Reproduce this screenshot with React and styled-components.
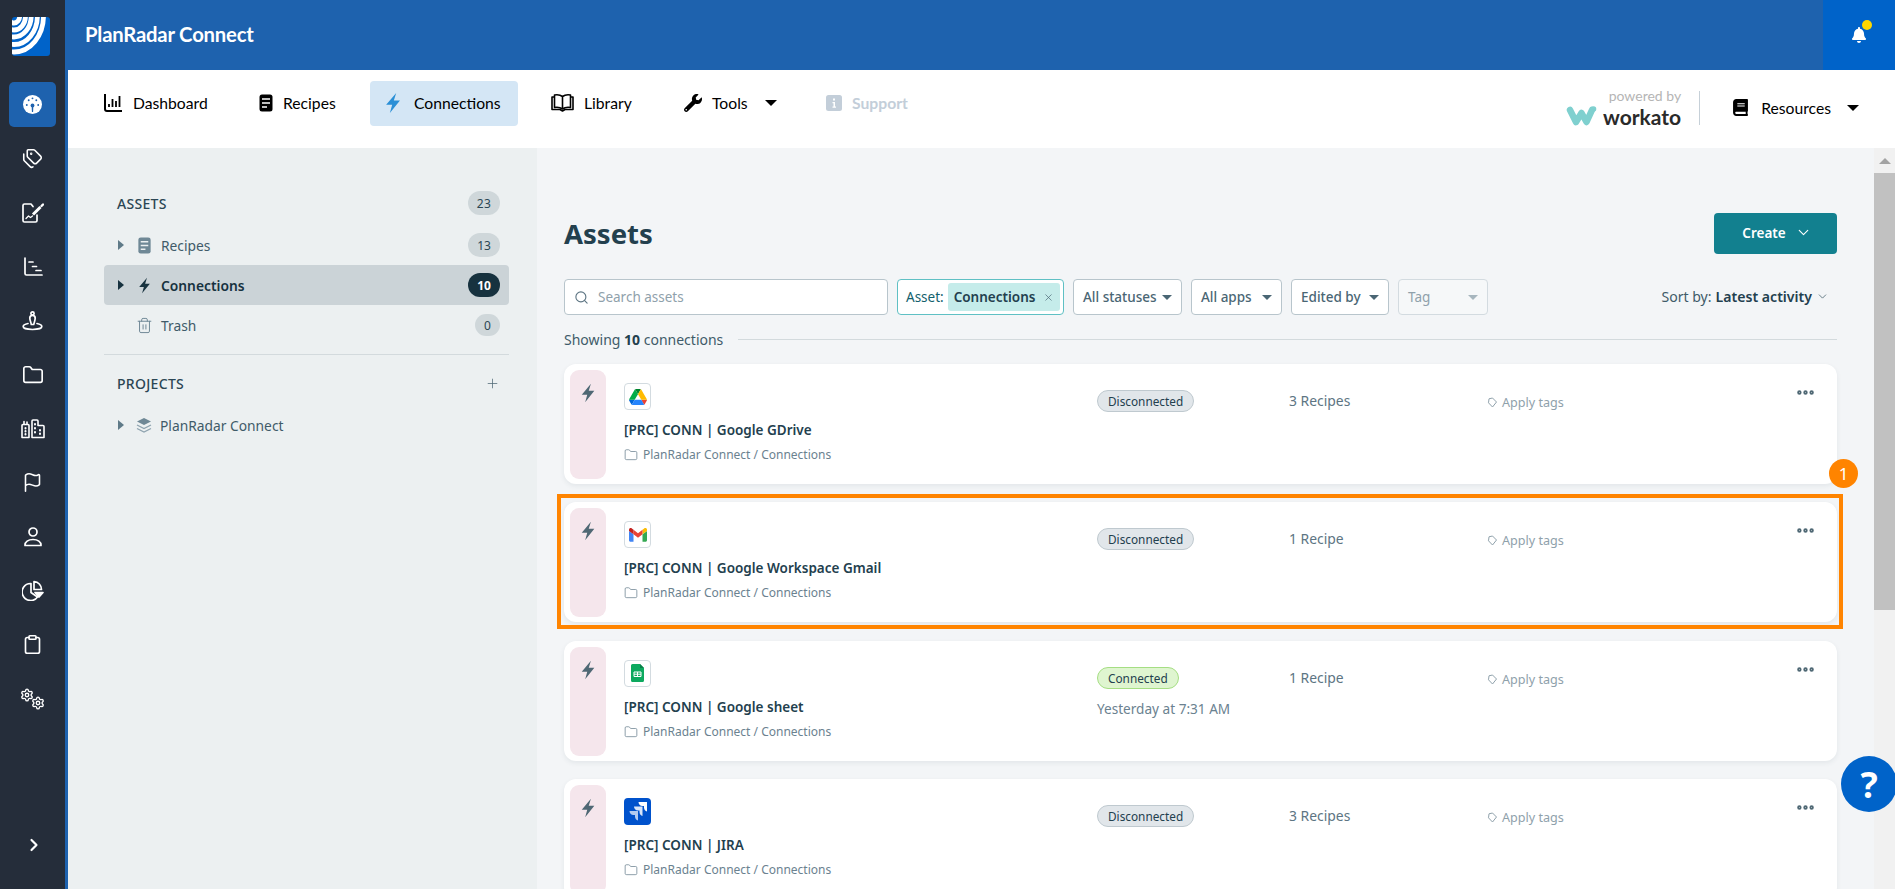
import React from "react";
import styled, { createGlobalStyle } from "styled-components";
import { Tags, Folder, Flag, Clipboard, ChevronRight, ChevronDown, Search, Plus, X, Trash2, MoreHorizontal, Settings } from "lucide-react";
import { FaBell, FaBook, FaWrench } from "react-icons/fa";

const GlobalStyle = createGlobalStyle`
  html, body {
    margin: 0;
    height: 100%;
    overflow: hidden;
    background: #fff;
    font-family: "Noto Sans", "Open Sans", sans-serif;
    color: #23404e;
  }
  #root { height: 100%; }
  * { box-sizing: border-box; }
`;

const Page = styled.div`
  position: relative;
  display: flex;
  width: 1895px;
  height: 889px;
  overflow: hidden;
`;

const Rail = styled.aside`
  width: 68px;
  flex: none;
  background: #252d3a;
  border-right: 3px solid #1e62ae;
  display: flex;
  flex-direction: column;
  align-items: center;
`;

const LogoBox = styled.div`
  height: 78px;
  padding: 17px 3px 0 0;
  width: 65px;
  display: flex;
  justify-content: center;
`;

const RailIcon = styled.div`
  width: 47px;
  height: 45px;
  margin-bottom: 9px;
  flex: none;
  border-radius: 5px;
  display: flex;
  align-items: center;
  justify-content: center;
  color: #fff;
  background: ${(p) => (p.$active ? "#1e62ae" : "transparent")};
  margin-top: ${(p) => (p.$active ? "4px" : "0")};
`;

const RailFoot = styled.div`
  margin-top: auto;
  height: 54px;
  color: #fff;
  display: flex;
  align-items: flex-start;
  padding-left: 2px;
`;

const Main = styled.div`
  flex: 1;
  min-width: 0;
  display: flex;
  flex-direction: column;
`;

const Header = styled.header`
  height: 70px;
  flex: none;
  background: #1e62ae;
  display: flex;
  align-items: center;
  justify-content: space-between;
  padding-left: 17px;
`;

const HeaderTitle = styled.div`
  font-family: "Lato", sans-serif;
  font-weight: 700;
  font-size: 20.3px;
  letter-spacing: -0.2px;
  color: #fff;
  margin-top: -2px;
`;

const BellBox = styled.div`
  position: relative;
  width: 72px;
  height: 70px;
  background: #0063c9;
  color: #fff;
  display: flex;
  align-items: center;
  justify-content: center;
`;

const BellDot = styled.span`
  position: absolute;
  top: 20px;
  left: 39px;
  width: 10px;
  height: 10px;
  border-radius: 50%;
  background: #ffd800;
`;

const NavBar = styled.nav`
  height: 78px;
  flex: none;
  background: #fff;
  display: flex;
  align-items: flex-start;
  padding: 11px 0 0 24px;
  font-family: "Lato", sans-serif;
  font-size: 15.7px;
  color: #000;
`;

const NavItem = styled.div`
  height: 45px;
  width: ${(p) => p.$width}px;
  margin-left: ${(p) => p.$offset || 0}px;
  flex: none;
  display: flex;
  align-items: center;
  gap: ${(p) => p.$gap || 10}px;
  padding: 0 0 2px 12px;
  border-radius: 4px;
  background: ${(p) => (p.$active ? "#d4e6f5" : "transparent")};
  color: ${(p) => (p.$muted ? "#c3ced9" : "#000")};
  font-weight: ${(p) => (p.$muted ? 700 : 400)};
`;

const Caret = styled.span`
  width: 0;
  height: 0;
  margin-left: ${(p) => p.$gap || 0}px;
  border-left: ${(p) => p.$size || 5}px solid transparent;
  border-right: ${(p) => p.$size || 5}px solid transparent;
  border-top: ${(p) => p.$size || 5}px solid ${(p) => p.$color || "#000"};
`;

const NavRight = styled.div`
  margin-left: auto;
  display: flex;
  align-items: center;
  height: 45px;
  padding-right: 36px;
  margin-top: 4px;
`;

const Powered = styled.div`
  display: flex;
  flex-direction: column;
  align-items: flex-end;
  padding-right: 18px;
  margin-right: 32px;
  border-right: 1px solid #c6d0d8;
  height: 34px;
  justify-content: center;
  font-family: "Lato", sans-serif;
`;

const PoweredBy = styled.span`
  font-size: 14px;
  line-height: 17px;
  color: #b5b5b5;
`;

const WorkatoRow = styled.div`
  display: flex;
  align-items: center;
  gap: 6px;
  height: 25px;
  line-height: 25px;
  font-weight: 700;
  font-size: 21px;
  color: #2a2a2a;
  flex: none;
`;

const Resources = styled.div`
  display: flex;
  align-items: center;
  gap: 12px;
  color: #000;
`;

const Body = styled.div`
  flex: 1;
  min-height: 0;
  display: flex;
`;

const Sidebar = styled.aside`
  width: 469px;
  flex: none;
  background: #ecf0f1;
  padding: 42px 28px 0 36px;
`;

const SectionHead = styled.div`
  height: 26px;
  padding: 0 9px 0 13px;
  display: flex;
  align-items: center;
  justify-content: space-between;
  font-size: 14px;
  font-weight: 500;
  letter-spacing: 0.3px;
  color: #2b4654;
  margin-bottom: ${(p) => p.$mb || 0}px;
`;

const Row = styled.div`
  height: 40px;
  padding: 0 9px 0 14px;
  display: flex;
  align-items: center;
  gap: 8px;
  border-radius: 4px;
  font-size: 13.8px;
  font-weight: ${(p) => (p.$active ? 600 : 400)};
  color: ${(p) => (p.$active ? "#17323f" : "#3f5b69")};
  background: ${(p) => (p.$active ? "#cbd3d7" : "transparent")};
`;

const Arrow = styled.span`
  width: 0;
  height: 0;
  margin-right: 4px;
  flex: none;
  border-top: 5px solid transparent;
  border-bottom: 5px solid transparent;
  border-left: 6px solid ${(p) => (p.$hidden ? "transparent" : p.$dark ? "#17323f" : "#5f7a88")};
`;

const Count = styled.span`
  margin-left: auto;
  min-width: ${(p) => (p.$small ? 25 : 32)}px;
  height: ${(p) => (p.$small ? 22 : 24)}px;
  border-radius: 12px;
  display: flex;
  align-items: center;
  justify-content: center;
  font-size: 12px;
  font-weight: ${(p) => (p.$dark ? 700 : 400)};
  color: ${(p) => (p.$dark ? "#fff" : "#2b4654")};
  background: ${(p) => (p.$dark ? "#17323f" : "#cfd7da")};
`;

const Divider = styled.hr`
  border: 0;
  border-top: 1px solid #d3dadd;
  margin: 9px 0 15px;
`;

const Content = styled.main`
  flex: 1;
  min-width: 0;
  background: #f3f5f7;
  padding: 65px 37px 0 27px;
  overflow: hidden;
`;

const TitleRow = styled.div`
  display: flex;
  align-items: center;
  justify-content: space-between;
  height: 41px;
  margin-bottom: 25px;
`;

const Title = styled.h1`
  margin: 0;
  font-size: 27.5px;
  font-weight: 700;
  color: #23404e;
`;

const CreateButton = styled.button`
  width: 123px;
  height: 41px;
  border: 0;
  border-radius: 4px;
  background: #12808f;
  color: #fff;
  font-family: inherit;
  font-size: 13.5px;
  font-weight: 600;
  display: flex;
  align-items: center;
  justify-content: center;
  gap: 9px;
  padding: 0 0 2px 3px;
`;

const Filters = styled.div`
  display: flex;
  align-items: center;
  gap: 9px;
  height: 36px;
`;

const SearchBox = styled.div`
  width: 324px;
  height: 36px;
  background: #fff;
  border: 1px solid #b8c5cc;
  border-radius: 4px;
  display: flex;
  align-items: center;
  gap: 9px;
  padding-left: 9px;
  font-size: 13.5px;
  color: #8fa1ab;
  & svg { color: #5d7583; }
`;

const AssetChip = styled.div`
  width: 167px;
  height: 36px;
  background: #fff;
  border: 1px solid #5fc0c4;
  border-radius: 4px;
  display: flex;
  align-items: center;
  gap: 4px;
  padding: 3px 3px 3px 8px;
  font-size: 13.5px;
  color: #12606d;
`;

const ChipValue = styled.span`
  flex: 1;
  height: 28px;
  border-radius: 3px;
  background: #c5ecea;
  color: #23404e;
  font-weight: 600;
  display: flex;
  align-items: center;
  justify-content: space-between;
  padding: 0 6px;
  & svg { color: #4a6674; }
`;

const Dropdown = styled.div`
  width: ${(p) => p.$width}px;
  height: 36px;
  flex: none;
  background: ${(p) => (p.$disabled ? "#f6f8f9" : "#fff")};
  border: 1px solid ${(p) => (p.$disabled ? "#d3dbe0" : "#b8c5cc")};
  border-radius: 4px;
  display: flex;
  align-items: center;
  justify-content: space-between;
  padding: 0 9px;
  font-size: 13.5px;
  font-weight: ${(p) => (p.$disabled ? 400 : 500)};
  color: ${(p) => (p.$disabled ? "#8fa1ab" : "#4a6674")};
`;

const SortBy = styled.div`
  margin-left: auto;
  display: flex;
  align-items: center;
  gap: 4px;
  padding: 0 8px 1px 0;
  font-size: 14.1px;
  color: #3f5b69;
  & b { font-weight: 600; color: #23404e; }
`;

const ShowingRow = styled.div`
  display: flex;
  align-items: center;
  gap: 15px;
  height: 20px;
  margin-top: 14px;
  margin-bottom: 15px;
  font-size: 14px;
  color: #3f5b69;
  white-space: nowrap;
  & b { font-weight: 700; color: #23404e; }
  &::after {
    content: "";
    flex: 1;
    border-top: 1px solid #d3dadd;
  }
`;

const CardWrap = styled.div`
  position: relative;
  margin-bottom: 18.3px;
`;

const Card = styled.article`
  height: 120px;
  background: #fff;
  border-radius: 12px;
  box-shadow: 0 2px 5px rgba(35, 64, 78, 0.08);
  padding: 6px;
  display: flex;
  overflow: hidden;
`;

const Strip = styled.div`
  width: 36px;
  height: 109px;
  flex: none;
  background: #f5e6ec;
  border-radius: 9px;
  display: flex;
  justify-content: center;
  padding-top: 13px;
  color: #4f6874;
`;

const CardMain = styled.div`
  width: 491px;
  flex: none;
  padding: 13px 0 0 18px;
`;

const AppIcon = styled.div`
  width: 27px;
  height: 27px;
  border-radius: 4px;
  background: ${(p) => (p.$filled ? "#0052cc" : "#fff")};
  border: ${(p) => (p.$filled ? "0" : "1px solid #d3dbe0")};
  display: flex;
  align-items: center;
  justify-content: center;
`;

const CardTitle = styled.div`
  margin-top: 10px;
  font-size: 13.5px;
  line-height: 20px;
  font-weight: 600;
  color: #23404e;
`;

const CardPath = styled.div`
  margin-top: 6px;
  display: flex;
  align-items: center;
  gap: 5px;
  font-size: 12px;
  line-height: 18px;
  color: #6b8290;
`;

const StatusCol = styled.div`
  width: 192px;
  flex: none;
  padding-top: 19px;
`;

const Status = styled.span`
  display: inline-flex;
  align-items: center;
  height: 22px;
  padding: 0 10px;
  border-radius: 11px;
  font-size: 11.8px;
  color: #23404e;
  background: ${(p) => (p.$ok ? "#dff5d0" : "#e1e6ea")};
  border: 1px solid ${(p) => (p.$ok ? "#a5de83" : "#bfc9cf")};
`;

const StatusTime = styled.div`
  margin-top: 10px;
  font-size: 13.6px;
  color: #6b8290;
`;

const RecipesCol = styled.div`
  width: 198px;
  flex: none;
  padding-top: 21px;
  font-size: 13.9px;
  line-height: 20px;
  color: #5d7583;
`;

const TagsCol = styled.div`
  flex: 1;
  padding-top: 24px;
  display: flex;
  align-items: flex-start;
  gap: 4px;
  font-size: 12.6px;
  line-height: 17px;
  color: #8fa1ab;
  & svg { margin-top: 3px; }
`;

const More = styled.div`
  width: 36px;
  flex: none;
  color: #4f6874;
  padding-top: 12px;
`;

const Highlight = styled.div`
  position: absolute;
  left: -7px;
  right: -6px;
  top: -8px;
  bottom: -7px;
  border: 4px solid #ff8400;
  pointer-events: none;
`;

const StepBadge = styled.div`
  position: absolute;
  top: -43px;
  right: -21px;
  width: 29px;
  height: 29px;
  border-radius: 50%;
  background: #ff8400;
  color: #fff;
  font-size: 17px;
  display: flex;
  align-items: center;
  justify-content: center;
`;

const Scrollbar = styled.div`
  width: 21px;
  flex: none;
  background: #f1f1f1;
  display: flex;
  flex-direction: column;
  align-items: center;
`;

const ScrollUp = styled.span`
  width: 0;
  height: 0;
  margin-top: 10px;
  margin-bottom: 9px;
  border-left: 6px solid transparent;
  border-right: 6px solid transparent;
  border-bottom: 6px solid #a3a3a3;
`;

const ScrollThumb = styled.div`
  width: 100%;
  height: 437px;
  background: #c1c1c1;
`;

const HelpButton = styled.div`
  position: absolute;
  left: 1841px;
  top: 756px;
  width: 56px;
  height: 56px;
  border-radius: 50%;
  background: #0063c9;
  color: #fff;
  font-size: 36px;
  font-weight: 700;
  display: flex;
  align-items: center;
  justify-content: center;
`;

const Bolt = ({ size = 16, color = "currentColor" }) => (
  <svg width={size} height={size} viewBox="0 0 24 24" fill={color}>
    <path d="M15.5 1 4.5 14h6.6L8.6 23l11-13.6h-6.7z" />
  </svg>
);

const PlanRadarLogo = () => (
  <svg width="38" height="39" viewBox="0 0 38 39">
    <defs>
      <clipPath id="logoClip">
        <rect width="38" height="39" rx="3" />
      </clipPath>
    </defs>
    <g clipPath="url(#logoClip)">
      <rect width="38" height="39" fill="#0063c9" />
      <g fill="none" stroke="#fff" strokeWidth="4.8">
        <ellipse cx="2" cy="-1" rx="5.700" ry="7" />
        <ellipse cx="2" cy="-1" rx="11.500" ry="14" />
        <ellipse cx="2" cy="-1" rx="17.200" ry="21" />
        <ellipse cx="2" cy="-1" rx="23.400" ry="28.500" />
        <ellipse cx="2" cy="-1" rx="29.500" ry="36" />
      </g>
    </g>
  </svg>
);

const GaugeIcon = () => (
  <svg width="19" height="19" viewBox="0 0 20 20">
    <circle cx="10" cy="10" r="10" fill="#fff" />
    <path d="M9 10h2l-.4 8h-1.200z" fill="#1e62ae" />
    <circle cx="10" cy="11" r="2" fill="#1e62ae" />
    <circle cx="4" cy="10.500" r="1" fill="#1e62ae" />
    <circle cx="16" cy="10.500" r="1" fill="#1e62ae" />
    <circle cx="6" cy="5.500" r="1" fill="#1e62ae" />
    <circle cx="14" cy="5.500" r="1" fill="#1e62ae" />
    <circle cx="10" cy="3.500" r="1" fill="#1e62ae" />
  </svg>
);

const strokeProps = { fill: "none", stroke: "currentColor", strokeWidth: 1.7, strokeLinecap: "round", strokeLinejoin: "round" };

const DocChartIcon = () => (
  <svg width="22" height="20" viewBox="0 0 22 20" {...strokeProps}>
    <path d="M15 12v5.500a1.500 1.500 0 0 1-1.500 1.500h-11A1.500 1.500 0 0 1 1 17.500v-15A1.500 1.500 0 0 1 2.500 1H9l2 2.500" />
    <path d="M4 15.500l2.500-2.500 2 1.500 2-1.500" strokeWidth="1.300" />
    <path d="M11 11.500l7.500-7.500" strokeWidth="3" strokeLinecap="butt" />
    <path d="M19.500 3l1.500-1.500" strokeWidth="2.400" />
  </svg>
);

const GanttIcon = () => (
  <svg width="20" height="20" viewBox="0 0 20 20" {...strokeProps}>
    <path d="M2 1v15.500a1.500 1.500 0 0 0 1.500 1.500H19" />
    <path d="M6 5h4M9.500 9.500h4M13 13.500h5" />
  </svg>
);

const PinIcon = () => (
  <svg width="21" height="20" viewBox="0 0 21 20" {...strokeProps}>
    <circle cx="10.500" cy="2.500" r="1.600" />
    <path d="M7.800 7a2.700 2.700 0 0 1 5.400 0c0 2-1 4.500-1.500 6.500h-2.400C9 11.500 7.800 9 7.800 7z" />
    <path d="M6 12.500c-3 .6-4.800 1.700-4.800 3 0 1.800 4.200 3 9.300 3s9.300-1.200 9.300-3c0-1.300-1.800-2.400-4.800-3" />
  </svg>
);

const BuildingsIcon = () => (
  <svg width="24" height="20" viewBox="0 0 24 20" {...strokeProps} strokeWidth="1.600">
    <path d="M1 18.500V6.500a1 1 0 0 1 1-1h5a1 1 0 0 1 1 1v12z" />
    <path d="M3 5V2.500M6 5V3" />
    <path d="M11 18.500V2a1 1 0 0 1 1-1h4a1 1 0 0 1 1 1v4.500h5a1 1 0 0 1 1 1v11z" />
    <path d="M4.500 9v.5M4.500 12v.5M4.500 15v.5M14 5v.5M14 9v.5M14 13v.5M19 11v.5M19 14.500v.5" strokeWidth="2" />
  </svg>
);

const PersonIcon = () => (
  <svg width="20" height="20" viewBox="0 0 20 20" {...strokeProps}>
    <circle cx="10" cy="5" r="4" />
    <path d="M2 18.500v-.5c0-3 3-5.500 8-5.500s8 2.500 8 5.500v.5z" />
  </svg>
);

const PieIcon = () => (
  <svg width="22" height="21" viewBox="0 0 22 21" {...strokeProps}>
    <path d="M9 3.500A8.500 8.500 0 1 0 15.500 17L9 12.500z" />
    <path d="M12 1.500a8 8 0 0 1 7.500 8H12z" />
    <path d="M13 12.500h8l-4 4.500z" fill="currentColor" />
  </svg>
);

const GearsIcon = () => (
  <svg width="25" height="22" viewBox="0 0 25 22">
    <Settings x={0} y={0} size={14} strokeWidth={2.3} />
    <Settings x={11} y={8} size={14} strokeWidth={2.3} />
  </svg>
);

const DashboardIcon = () => (
  <svg width="19" height="19" viewBox="0 0 19 19" fill="none" stroke="#000" strokeWidth="2">
    <path d="M1 1v15a2 2 0 0 0 2 2h15" />
    <path d="M5 14v-3M8.500 14V6M12 14V8M15.500 14V3" strokeWidth="1.800" />
  </svg>
);

const RecipeIcon = ({ color = "#000", line = "#fff", size = 18 }) => (
  <svg width={size} height={size} viewBox="0 0 16 18">
    <rect x="1.500" y="0.500" width="13" height="17" rx="2.500" fill={color} />
    <path d="M4 5h8M4 9h8M4 13h5" stroke={line} strokeWidth="1.600" />
  </svg>
);

const LibraryIcon = () => (
  <svg width="23" height="19" viewBox="0 0 23 19" fill="none" stroke="#000" strokeWidth="1.600" strokeLinejoin="round">
    <path d="M11.500 3.500C9.500 2 6.500 1.500 3.500 2v12.500c3-.5 6 0 8 1.500 2-1.500 5-2 8-1.500V2c-3-.5-6 0-8 1.500zM11.500 3.500V16" />
    <path d="M3.500 4H1v12.500h8l2.500 1.500 2.500-1.500h8V4h-2.500" />
  </svg>
);

const InfoSquare = () => (
  <svg width="16" height="16" viewBox="0 0 16 16">
    <rect width="16" height="16" rx="2.500" fill="#c3ced9" />
    <path d="M7 3.500h2v2H7zM6.500 7H9v4.500h1v1.200H6.500v-1.200h1V8.200h-1z" fill="#fff" />
  </svg>
);

const WorkatoMark = () => (
  <svg width="31" height="20" viewBox="0 0 31 20" fill="none" stroke="#7fd0cf" strokeWidth="6.500" strokeLinecap="round" strokeLinejoin="round">
    <path d="M4 4l6 12 5.500-9 5 9 5.500-12" />
    <circle cx="27.500" cy="3" r="0.800" fill="#7fd0cf" strokeWidth="4" />
  </svg>
);

const TagDiamond = () => (
  <svg width="11" height="11" viewBox="0 0 11 11" fill="none" stroke="#8fa1ab" strokeWidth="1" strokeLinejoin="round">
    <path d="M5.500 1 9.500 5 5.500 10 1.500 5.800 2 1.800z" />
  </svg>
);

const StackIcon = () => (
  <svg width="16" height="16" viewBox="0 0 16 16">
    <path d="M8 1l7 3.500L8 8 1 4.500z" fill="#6f8896" />
    <path d="M1 8l7 3.500L15 8M1 11.500L8 15l7-3.500" fill="none" stroke="#8ea3af" strokeWidth="1.300" />
  </svg>
);

const DriveLogo = () => (
  <svg width="18" height="16" viewBox="0 0 87.300 78">
    <path d="m6.600 66.850 3.850 6.650c.8 1.400 1.950 2.500 3.300 3.300l13.750-23.800h-27.500c0 1.550.4 3.100 1.200 4.500z" fill="#0066da" />
    <path d="m43.650 25-13.750-23.800c-1.350.8-2.500 1.900-3.300 3.300l-25.400 44a9.060 9.060 0 0 0 -1.200 4.500h27.500z" fill="#00ac47" />
    <path d="m73.550 76.800c1.350-.8 2.500-1.900 3.300-3.300l1.600-2.750 7.650-13.250c.8-1.400 1.200-2.950 1.200-4.500h-27.502l5.852 11.500z" fill="#ea4335" />
    <path d="m43.650 25 13.750-23.800c-1.350-.8-2.900-1.200-4.500-1.200h-18.500c-1.600 0-3.150.45-4.500 1.200z" fill="#00832d" />
    <path d="m59.800 53h-32.300l-13.750 23.800c1.350.8 2.900 1.200 4.500 1.200h50.800c1.600 0 3.150-.45 4.500-1.200z" fill="#2684fc" />
    <path d="m73.400 26.500-12.700-22c-.8-1.400-1.950-2.500-3.300-3.300l-13.750 23.800 16.150 28h27.450c0-1.550-.4-3.100-1.200-4.500z" fill="#ffba00" />
  </svg>
);

const GmailLogo = () => (
  <svg width="18" height="14" viewBox="0 0 24 18">
    <path fill="#4285f4" d="M2 18h4V8L0 3.500V16c0 1.100.9 2 2 2z" />
    <path fill="#34a853" d="M18 18h4c1.100 0 2-.9 2-2V3.500L18 8z" />
    <path fill="#fbbc04" d="M18 2v6l6-4.500V2c0-2-2.200-3-3.800-1.800z" />
    <path fill="#ea4335" d="M6 8V2l6 4.500L18 2v6l-6 4.500z" />
    <path fill="#c5221f" d="M0 2v1.500L6 8V2L3.800.2C2.200-1 0 0 0 2z" />
  </svg>
);

const SheetsLogo = () => (
  <svg width="13" height="18" viewBox="0 0 13 18">
    <path d="M1.500 0H9l4 4v12.500a1.500 1.500 0 0 1-1.500 1.500h-10A1.500 1.500 0 0 1 0 16.500v-15A1.500 1.500 0 0 1 1.500 0z" fill="#0da95f" />
    <path d="M9 0l4 4H9z" fill="#0a8049" />
    <path d="M3 8h7v4.500H3zM6.500 8v4.500M3 10.200h7" fill="none" stroke="#fff" strokeWidth="1" />
  </svg>
);

const JiraLogo = () => (
  <svg width="20" height="20" viewBox="0 0 20 20" fill="#fff">
    <path d="M19 1H10.500c0 2 1.500 4 4 4H16v1.500c0 2.300 1.500 3.800 3 4z" />
    <path d="M14.500 5.500H6c0 2 1.500 4 4 4h1.500V11c0 2.300 1.500 3.800 3 4z" opacity="0.85" />
    <path d="M10 10H1.500c0 2 1.500 4 4 4H7v1.500c0 2.300 1.500 3.800 3 4z" opacity="0.7" />
  </svg>
);

const railIcons = [
  <Tags size={21} strokeWidth={1.8} />,
  <DocChartIcon />,
  <GanttIcon />,
  <PinIcon />,
  <Folder size={22} strokeWidth={1.8} />,
  <BuildingsIcon />,
  <Flag size={21} strokeWidth={1.8} />,
  <PersonIcon />,
  <PieIcon />,
  <Clipboard size={21} strokeWidth={1.9} />,
  <GearsIcon />,
];

const connections = [
  { name: "Google GDrive", logo: <DriveLogo />, status: "Disconnected", recipes: "3 Recipes" },
  { name: "Google Workspace Gmail", logo: <GmailLogo />, status: "Disconnected", recipes: "1 Recipe", highlighted: true },
  { name: "Google sheet", logo: <SheetsLogo />, status: "Connected", time: "Yesterday at 7:31 AM", recipes: "1 Recipe" },
  { name: "JIRA", logo: <JiraLogo />, filled: true, status: "Disconnected", recipes: "3 Recipes" },
];

function ConnectionCard({ item }) {
  const ok = item.status === "Connected";
  return (
    <CardWrap>
      <Card>
        <Strip>
          <Bolt size={20} />
        </Strip>
        <CardMain>
          <AppIcon $filled={item.filled}>{item.logo}</AppIcon>
          <CardTitle>[PRC] CONN | {item.name}</CardTitle>
          <CardPath>
            <Folder size={14} strokeWidth={1.3} />
            PlanRadar Connect / Connections
          </CardPath>
        </CardMain>
        <StatusCol>
          <Status $ok={ok}>{item.status}</Status>
          {item.time && <StatusTime>{item.time}</StatusTime>}
        </StatusCol>
        <RecipesCol>{item.recipes}</RecipesCol>
        <TagsCol>
          <TagDiamond />
          Apply tags
        </TagsCol>
        <More>
          <MoreHorizontal size={21} strokeWidth={3} />
        </More>
      </Card>
      {item.highlighted && (
        <>
          <Highlight />
          <StepBadge>1</StepBadge>
        </>
      )}
    </CardWrap>
  );
}

export default function App() {
  return (
    <>
      <GlobalStyle />
      <Page>
        <Rail>
          <LogoBox>
            <PlanRadarLogo />
          </LogoBox>
          <RailIcon $active>
            <GaugeIcon />
          </RailIcon>
          {railIcons.map((icon, i) => (
            <RailIcon key={i}>{icon}</RailIcon>
          ))}
          <RailFoot>
            <ChevronRight size={20} strokeWidth={2.6} />
          </RailFoot>
        </Rail>
        <Main>
          <Header>
            <HeaderTitle>PlanRadar Connect</HeaderTitle>
            <BellBox>
              <FaBell size={16} />
              <BellDot />
            </BellBox>
          </Header>
          <NavBar>
            <NavItem $width={153}>
              <DashboardIcon />
              Dashboard
            </NavItem>
            <NavItem $width={125} $gap={8}>
              <RecipeIcon />
              Recipes
            </NavItem>
            <NavItem $width={148} $active $gap={10}>
              <Bolt size={22} color="#2a8fd6" />
              Connections
            </NavItem>
            <NavItem $width={133} $offset={21}>
              <LibraryIcon />
              Library
            </NavItem>
            <NavItem $width={142}>
              <FaWrench size={18} />
              Tools
              <Caret $gap={7} $size={6} />
            </NavItem>
            <NavItem $width={120} $muted>
              <InfoSquare />
              Support
            </NavItem>
            <NavRight>
              <Powered>
                <PoweredBy>powered by</PoweredBy>
                <WorkatoRow>
                  <WorkatoMark />
                  workato
                </WorkatoRow>
              </Powered>
              <Resources>
                <FaBook size={17} />
                Resources
                <Caret $gap={4} $size={6} />
              </Resources>
            </NavRight>
          </NavBar>
          <Body>
            <Sidebar>
              <SectionHead $mb={9}>
                ASSETS
                <Count>23</Count>
              </SectionHead>
              <Row>
                <Arrow />
                <RecipeIcon color="#6f8896" line="#ecf0f1" size={17} />
                Recipes
                <Count>13</Count>
              </Row>
              <Row $active>
                <Arrow $dark />
                <Bolt size={17} color="#17323f" />
                Connections
                <Count $dark>10</Count>
              </Row>
              <Row>
                <Arrow $hidden />
                <Trash2 size={17} strokeWidth={1.4} color="#6f8896" />
                Trash
                <Count $small>0</Count>
              </Row>
              <Divider />
              <SectionHead $mb={9}>
                PROJECTS
                <Plus size={15} strokeWidth={1.2} color="#4f6874" />
              </SectionHead>
              <Row>
                <Arrow />
                <StackIcon />
                PlanRadar Connect
              </Row>
            </Sidebar>
            <Content>
              <TitleRow>
                <Title>Assets</Title>
                <CreateButton>
                  Create
                  <ChevronDown size={17} strokeWidth={1.6} />
                </CreateButton>
              </TitleRow>
              <Filters>
                <SearchBox>
                  <Search size={15} strokeWidth={1.8} />
                  Search assets
                </SearchBox>
                <AssetChip>
                  Asset:
                  <ChipValue>
                    Connections
                    <X size={11} strokeWidth={1.5} />
                  </ChipValue>
                </AssetChip>
                <Dropdown $width={109}>
                  All statuses
                  <Caret $size={5} $color="#4a6674" />
                </Dropdown>
                <Dropdown $width={91}>
                  All apps
                  <Caret $size={5} $color="#4a6674" />
                </Dropdown>
                <Dropdown $width={98}>
                  Edited by
                  <Caret $size={5} $color="#4a6674" />
                </Dropdown>
                <Dropdown $width={90} $disabled>
                  Tag
                  <Caret $size={5} $color="#a7b6be" />
                </Dropdown>
                <SortBy>
                  Sort by: <b>Latest activity</b>
                  <ChevronDown size={13} strokeWidth={1.4} />
                </SortBy>
              </Filters>
              <ShowingRow>
                <span>
                  Showing <b>10</b> connections
                </span>
              </ShowingRow>
              {connections.map((item) => (
                <ConnectionCard key={item.name} item={item} />
              ))}
            </Content>
            <Scrollbar>
              <ScrollUp />
              <ScrollThumb />
            </Scrollbar>
          </Body>
        </Main>
        <HelpButton>?</HelpButton>
      </Page>
    </>
  );
}
